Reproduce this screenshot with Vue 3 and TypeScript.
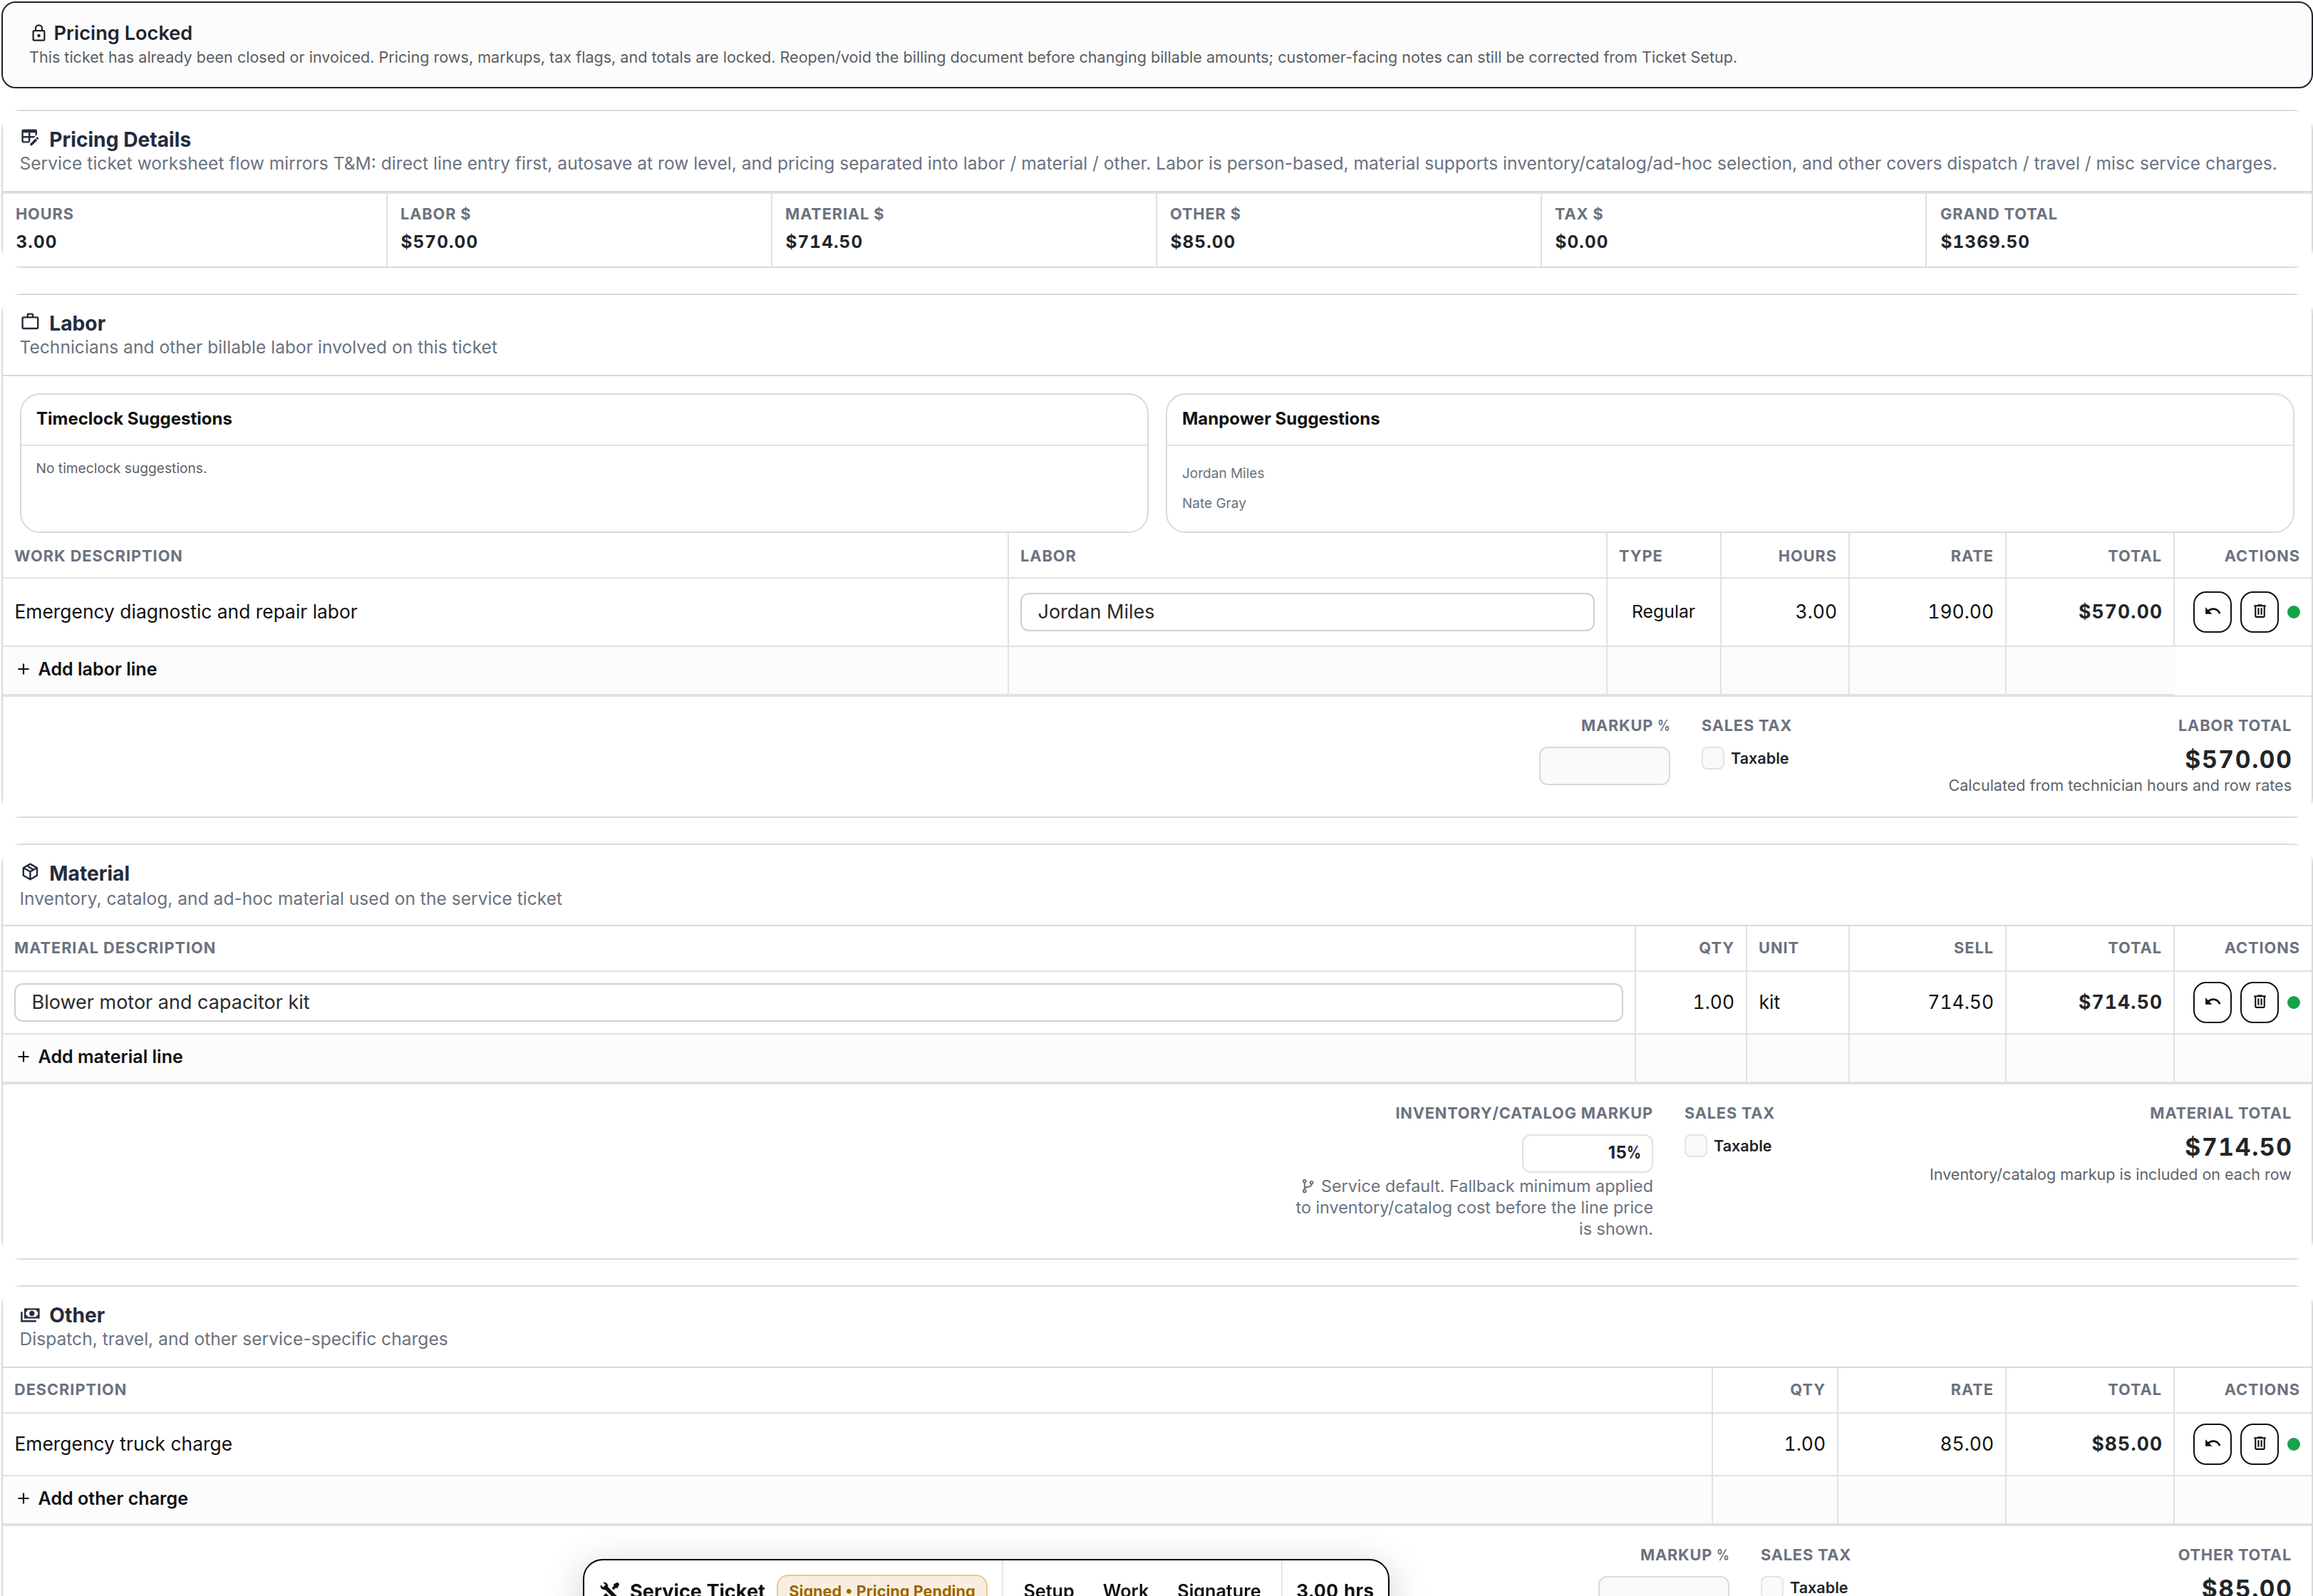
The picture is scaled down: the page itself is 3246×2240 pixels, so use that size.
<script setup lang="ts">
interface Column {
  label: string
  width: number
  end?: boolean
}

interface Cell {
  text: string
  kind: 'text' | 'input' | 'select' | 'number' | 'total' | 'actions'
}

interface Section {
  key: string
  title: string
  subtitle: string
  icon: string
  columns: Column[]
  row: Cell[]
  addLabel: string
  markupLabel: string
  markupPercent?: boolean
  markupValue?: string
  markupNote?: string
  totalLabel: string
  total: string
  totalNote: string
  totalWidth: number
}

const icons = {
  lock: 'M12,17C10.89,17 10,16.1 10,15C10,13.89 10.89,13 12,13A2,2 0 0,1 14,15A2,2 0 0,1 12,17M18,20V10H6V20H18M18,8A2,2 0 0,1 20,10V20A2,2 0 0,1 18,22H6C4.89,22 4,21.1 4,20V10C4,8.89 4.89,8 6,8H7V6A5,5 0 0,1 12,1A5,5 0 0,1 17,6V8H18M12,3A3,3 0 0,0 9,6V8H15V6A3,3 0 0,0 12,3Z',
  tableEdit: 'M21.7,13.35L20.7,14.35L18.65,12.3L19.65,11.3C19.86,11.09 20.21,11.09 20.42,11.3L21.7,12.58C21.91,12.79 21.91,13.14 21.7,13.35M12,18.94L18.07,12.88L20.12,14.93L14.06,21H12V18.94M4,2H18A2,2 0 0,1 20,4V8.17L16.17,12H12V16.17L10.17,18H4A2,2 0 0,1 2,16V4A2,2 0 0,1 4,2M4,6V10H10V6H4M12,6V10H18V6H12M4,12V16H10V12H4Z',
  briefcase: 'M20,6H16V4A2,2 0 0,0 14,2H10A2,2 0 0,0 8,4V6H4A2,2 0 0,0 2,8V19A2,2 0 0,0 4,21H20A2,2 0 0,0 22,19V8A2,2 0 0,0 20,6M10,4H14V6H10V4M20,19H4V8H20V19Z',
  box: 'M21,16.5C21,16.88 20.79,17.21 20.47,17.38L12.57,21.82C12.41,21.94 12.21,22 12,22C11.79,22 11.59,21.94 11.43,21.82L3.53,17.38C3.21,17.21 3,16.88 3,16.5V7.5C3,7.12 3.21,6.79 3.53,6.62L11.43,2.18C11.59,2.06 11.79,2 12,2C12.21,2 12.41,2.06 12.57,2.18L20.47,6.62C20.79,6.79 21,7.12 21,7.5V16.5M12,4.15L10.11,5.22L16,8.61L17.96,7.5L12,4.15M6.04,7.5L12,10.85L13.96,9.75L8.08,6.35L6.04,7.5M5,15.91L11,19.29V12.58L5,9.21V15.91M19,15.91V9.21L13,12.58V19.29L19,15.91Z',
  cash: 'M5,6H23V18H5V6M14,9A3,3 0 0,1 17,12A3,3 0 0,1 14,15A3,3 0 0,1 11,12A3,3 0 0,1 14,9M9,8A2,2 0 0,1 7,10V14A2,2 0 0,1 9,16H19A2,2 0 0,1 21,14V10A2,2 0 0,1 19,8H9M1,10H3V20H19V22H1V10Z',
  plus: 'M19,13H13V19H11V13H5V11H11V5H13V11H19V13Z',
  undo: 'M12.5,8C9.85,8 7.45,9 5.6,10.6L2,7V16H11L7.38,12.38C8.77,11.22 10.54,10.5 12.5,10.5C16.04,10.5 19.05,12.81 20.1,16L22.47,15.22C21.08,11.03 17.15,8 12.5,8Z',
  trash: 'M9,3V4H4V6H5V19A2,2 0 0,0 7,21H17A2,2 0 0,0 19,19V6H20V4H15V3H9M7,6H17V19H7V6M9,8V17H11V8H9M13,8V17H15V8H13Z',
  branch: 'M13,14C9.64,14 8.54,15.35 8.18,16.24C9.25,16.7 10,17.76 10,19A3,3 0 0,1 7,22A3,3 0 0,1 4,19C4,17.69 4.83,16.58 6,16.17V7.83C4.83,7.42 4,6.31 4,5A3,3 0 0,1 7,2A3,3 0 0,1 10,5C10,6.31 9.17,7.42 8,7.83V13.12C8.88,12.47 10.16,12 12,12C14.67,12 15.56,10.66 15.85,9.77C14.77,9.32 14,8.25 14,7A3,3 0 0,1 17,4A3,3 0 0,1 20,7C20,8.34 19.12,9.5 17.91,9.86C17.65,11.29 16.68,14 13,14M7,18A1,1 0 0,0 6,19A1,1 0 0,0 7,20A1,1 0 0,0 8,19A1,1 0 0,0 7,18M7,4A1,1 0 0,0 6,5A1,1 0 0,0 7,6A1,1 0 0,0 8,5A1,1 0 0,0 7,4M17,6A1,1 0 0,0 16,7A1,1 0 0,0 17,8A1,1 0 0,0 18,7A1,1 0 0,0 17,6Z',
  tools: 'M21.71 20.29L20.29 21.71A1 1 0 0 1 18.88 21.71L7 9.85A3.81 3.81 0 0 1 6 10A4 4 0 0 1 2.22 4.7L4.76 7.24L5.29 6.71L6.71 5.29L7.24 4.76L4.7 2.22A4 4 0 0 1 10 6A3.81 3.81 0 0 1 9.85 7L21.71 18.88A1 1 0 0 1 21.71 20.29M2.29 18.88A1 1 0 0 0 2.29 20.29L3.71 21.71A1 1 0 0 0 5.12 21.71L10.59 16.25L7.76 13.42M20 2L16 4V6L13.83 8.17L15.83 10.17L18 8H20L22 4Z',
}

const metrics = [
  { label: 'Hours', value: '3.00' },
  { label: 'Labor $', value: '$570.00' },
  { label: 'Material $', value: '$714.50' },
  { label: 'Other $', value: '$85.00' },
  { label: 'Tax $', value: '$0.00' },
  { label: 'Grand Total', value: '$1369.50' },
]

const manpower = ['Jordan Miles', 'Nate Gray']

const sections: Section[] = [
  {
    key: 'labor',
    title: 'Labor',
    subtitle: 'Technicians and other billable labor involved on this ticket',
    icon: icons.briefcase,
    columns: [
      { label: 'Work Description', width: 1412 },
      { label: 'Labor', width: 840 },
      { label: 'Type', width: 160 },
      { label: 'Hours', width: 180, end: true },
      { label: 'Rate', width: 220, end: true },
      { label: 'Total', width: 236, end: true },
      { label: 'Actions', width: 192, end: true },
    ],
    row: [
      { text: 'Emergency diagnostic and repair labor', kind: 'text' },
      { text: 'Jordan Miles', kind: 'input' },
      { text: 'Regular', kind: 'select' },
      { text: '3.00', kind: 'number' },
      { text: '190.00', kind: 'number' },
      { text: '$570.00', kind: 'total' },
      { text: '', kind: 'actions' },
    ],
    addLabel: 'Add labor line',
    markupLabel: 'Markup',
    markupPercent: true,
    totalLabel: 'Labor Total',
    total: '$570.00',
    totalNote: 'Calculated from technician hours and row rates',
    totalWidth: 482,
  },
  {
    key: 'material',
    title: 'Material',
    subtitle: 'Inventory, catalog, and ad-hoc material used on the service ticket',
    icon: icons.box,
    columns: [
      { label: 'Material Description', width: 2292 },
      { label: 'Qty', width: 156, end: true },
      { label: 'Unit', width: 144 },
      { label: 'Sell', width: 220, end: true },
      { label: 'Total', width: 236, end: true },
      { label: 'Actions', width: 192, end: true },
    ],
    row: [
      { text: 'Blower motor and capacitor kit', kind: 'input' },
      { text: '1.00', kind: 'number' },
      { text: 'kit', kind: 'text' },
      { text: '714.50', kind: 'number' },
      { text: '$714.50', kind: 'total' },
      { text: '', kind: 'actions' },
    ],
    addLabel: 'Add material line',
    markupLabel: 'Inventory/Catalog Markup',
    markupValue: '15',
    markupNote: 'Service default. Fallback minimum applied to inventory/catalog cost before the line price is shown.',
    totalLabel: 'Material Total',
    total: '$714.50',
    totalNote: 'Inventory/catalog markup is included on each row',
    totalWidth: 506,
  },
  {
    key: 'other',
    title: 'Other',
    subtitle: 'Dispatch, travel, and other service-specific charges',
    icon: icons.cash,
    columns: [
      { label: 'Description', width: 2400 },
      { label: 'Qty', width: 176, end: true },
      { label: 'Rate', width: 236, end: true },
      { label: 'Total', width: 236, end: true },
      { label: 'Actions', width: 192, end: true },
    ],
    row: [
      { text: 'Emergency truck charge', kind: 'text' },
      { text: '1.00', kind: 'number' },
      { text: '85.00', kind: 'number' },
      { text: '$85.00', kind: 'total' },
      { text: '', kind: 'actions' },
    ],
    addLabel: 'Add other charge',
    markupLabel: 'Markup',
    markupPercent: true,
    totalLabel: 'Other Total',
    total: '$85.00',
    totalNote: '',
    totalWidth: 399,
  },
]

const tracks = (columns: Column[]) => ({
  gridTemplateColumns: columns.map((c) => `${c.width}px`).join(' '),
})
</script>

<template>
  <main class="page">
    <section class="alert">
      <div class="alert-title">
        <svg class="icon" viewBox="0 0 24 24"><path :d="icons.lock" /></svg>
        <span>Pricing Locked</span>
      </div>
      <div class="alert-text">
        This ticket has already been closed or invoiced. Pricing rows, markups, tax flags, and totals are locked.
        Reopen/void the billing document before changing billable amounts; customer-facing notes can still be corrected
        from Ticket Setup.
      </div>
    </section>

    <section class="card pricing">
      <header class="card-head">
        <h2><svg class="icon" viewBox="0 0 24 24"><path :d="icons.tableEdit" /></svg><span>Pricing Details</span></h2>
        <p>
          Service ticket worksheet flow mirrors T&amp;M: direct line entry first, autosave at row level, and pricing
          separated into labor / material / other. Labor is person-based, material supports inventory/catalog/ad-hoc
          selection, and other covers dispatch / travel / misc service charges.
        </p>
      </header>
      <div class="metrics">
        <div v-for="m in metrics" :key="m.label" class="metric">
          <div class="label">{{ m.label }}</div>
          <div class="metric-value">{{ m.value }}</div>
        </div>
      </div>
    </section>

    <section v-for="s in sections" :key="s.key" class="card" :class="s.key">
      <header class="card-head">
        <h2><svg class="icon" viewBox="0 0 24 24"><path :d="s.icon" /></svg><span>{{ s.title }}</span></h2>
        <p>{{ s.subtitle }}</p>
      </header>

      <div v-if="s.key === 'labor'" class="suggestions">
        <div class="suggestion">
          <h3>Timeclock Suggestions</h3>
          <div class="suggestion-empty">No timeclock suggestions.</div>
        </div>
        <div class="suggestion">
          <h3>Manpower Suggestions</h3>
          <div class="people">
            <div v-for="p in manpower" :key="p">{{ p }}</div>
          </div>
        </div>
      </div>

      <div class="grid grid-head" :style="tracks(s.columns)">
        <div v-for="c in s.columns" :key="c.label" class="cell label" :class="{ end: c.end }">{{ c.label }}</div>
      </div>
      <div class="grid grid-row" :style="tracks(s.columns)">
        <div v-for="(c, i) in s.row" :key="i" class="cell" :class="c.kind">
          <template v-if="c.kind === 'actions'">
            <span class="btn"><svg viewBox="0 0 24 24"><path :d="icons.undo" /></svg></span>
            <span class="btn"><svg viewBox="0 0 24 24"><path :d="icons.trash" /></svg></span>
            <span class="dot"></span>
          </template>
          <span v-else-if="c.kind === 'input'" class="field">{{ c.text }}</span>
          <span v-else class="value">{{ c.text }}</span>
        </div>
      </div>
      <div class="grid grid-add" :style="tracks(s.columns)">
        <div v-for="(c, i) in s.columns" :key="c.label" class="cell">
          <span v-if="i === 0" class="add">
            <svg viewBox="0 0 24 24"><path :d="icons.plus" /></svg>{{ s.addLabel }}
          </span>
        </div>
      </div>

      <footer class="foot">
        <div class="foot-markup">
          <div class="label">{{ s.markupLabel }}<template v-if="s.markupPercent">&nbsp;<span class="pct">%</span></template></div>
          <div class="markup" :class="{ filled: s.markupValue }">
            <template v-if="s.markupValue">{{ s.markupValue }}<span class="pct">%</span></template>
          </div>
          <div v-if="s.markupNote" class="markup-note">
            <svg viewBox="0 0 24 24"><path :d="icons.branch" /></svg> {{ s.markupNote }}
          </div>
        </div>
        <div class="foot-tax">
          <div class="label">Sales Tax</div>
          <div class="tax"><span class="check"></span>Taxable</div>
        </div>
        <div class="foot-total" :style="{ width: s.totalWidth + 'px' }">
          <div class="label">{{ s.totalLabel }}</div>
          <div class="foot-amount">{{ s.total }}</div>
          <div class="foot-note">{{ s.totalNote }}</div>
        </div>
      </footer>
    </section>

    <nav class="dock">
      <div class="dock-main">
        <svg viewBox="0 0 24 24"><path :d="icons.tools" /></svg>
        <strong>Service Ticket</strong>
        <span class="badge">Signed • Pricing Pending</span>
      </div>
      <div class="dock-links"><span>Setup</span><span>Work</span><span>Signature</span></div>
      <div class="dock-hours">3.00 hrs</div>
    </nav>
  </main>
</template>

<style>
html,
body {
  margin: 0;
  overflow: hidden;
  background: #fff;
}
</style>

<style scoped>
.page {
  box-sizing: border-box;
  width: 3246px;
  height: 2240px;
  overflow: hidden;
  padding: 2px 0 0 2px;
  font-family: Inter, 'Liberation Sans', sans-serif;
  color: #111;
}
.page *,
.page *::before {
  box-sizing: border-box;
}
svg {
  display: block;
  flex: none;
  fill: currentColor;
}
h2,
h3,
p {
  margin: 0;
}

.alert {
  height: 122px;
  padding: 25px 36px 0 37px;
  border: 2px solid #212529;
  border-radius: 20px;
  background: #fcfcfc;
}
.alert-title {
  display: flex;
  align-items: center;
  gap: 7.5px;
  height: 34px;
  font-size: 27.2px;
  font-weight: 600;
  color: #212529;
}
.alert-title .icon {
  width: 27px;
  height: 27px;
}
.alert-text {
  padding-top: 1px;
  font-size: 21.57px;
  line-height: 32px;
  white-space: nowrap;
  color: #5a5e62;
}

.card {
  margin-top: 36px;
  border: 2px solid #dadada;
  border-radius: 29px;
}
.pricing {
  margin-top: 30px;
}
.card-head {
  height: 114px;
  padding: 22px 24px 0 23.5px;
  border-bottom: 2px solid #dadada;
  background: #fff;
}
.card-head h2 {
  display: flex;
  align-items: center;
  gap: 13px;
  height: 36px;
  font-size: 28.2px;
  font-weight: 700;
  line-height: 36px;
  color: #252b3d;
}
.card-head .icon {
  width: 28.8px;
  height: 28.8px;
  margin-bottom: 6px;
}
.card-head p {
  margin-top: -1px;
  font-size: 24.6px;
  line-height: 32px;
  white-space: nowrap;
  color: #6b7280;
}
.material .card-head p {
  padding-top: 2px;
}

.label {
  font-size: 21.76px;
  font-weight: 700;
  letter-spacing: 0.04em;
  text-transform: uppercase;
  white-space: nowrap;
  color: #6b7280;
}
.pct {
  display: inline-block;
  width: 0.82em;
  letter-spacing: 0;
  font-weight: 600;
  text-align: left;
  transform: scaleX(0.82);
  transform-origin: left;
}

.metrics {
  display: grid;
  grid-template-columns: repeat(6, 540px);
  height: 104px;
  border-top: 2px solid #e1e1e1;
  background: #fff;
}
.metric {
  padding: 14px 18px 0;
  border-right: 2px solid #e1e1e1;
}
.metric:last-child {
  border-right: 0;
  padding-left: 19px;
}
.metric .label {
  line-height: 28px;
}
.metric-value {
  padding-top: 8px;
  padding-left: 0.5px;
  font-size: 24.32px;
  font-weight: 700;
  letter-spacing: 1.1px;
  line-height: 34px;
  font-variant-numeric: tabular-nums;
  color: #212529;
}

.suggestions {
  display: flex;
  gap: 24px;
  padding: 24px 24px 0;
  background: #fff;
}
.suggestion {
  width: 1584px;
  height: 196px;
  border: 2px solid #dadada;
  border-radius: 28px;
  overflow: hidden;
}
.suggestion h3 {
  height: 72px;
  padding: 17px 20px 0 21px;
  border-bottom: 2px solid #e1e1e1;
  font-size: 24px;
  font-weight: 700;
  line-height: 34px;
}
.suggestion-empty,
.people {
  padding: 16px 20px 0 20.5px;
  font-size: 19.2px;
  line-height: 30px;
  color: #5f6368;
}
.people {
  padding-top: 18px;
  padding-left: 21px;
  font-size: 19px;
  line-height: 42px;
  color: #6b7280;
}

.grid {
  display: grid;
  background: #fff;
}
.cell {
  display: flex;
  align-items: center;
  padding: 0 16px;
  border-right: 2px solid #e1e1e1;
  border-bottom: 2px solid #e1e1e1;
  white-space: nowrap;
}
.cell:last-child {
  border-right: 0;
}
.grid-head {
  height: 64px;
}
.grid-head .cell {
  padding-bottom: 2px;
  letter-spacing: 0.044em;
}
.labor .grid-head .cell {
  padding-top: 1px;
  padding-bottom: 0;
}
.end {
  justify-content: flex-end;
}
.grid-row {
  height: 88px;
  font-size: 26.4px;
}
.labor .grid-row {
  height: 96px;
}
.value {
  padding-bottom: 2px;
}
.grid-row .text {
  padding-left: 16.5px;
}
.grid-row .select {
  padding-left: 34px;
  font-size: 24.8px;
}
.number,
.total {
  justify-content: flex-end;
  font-variant-numeric: tabular-nums;
}
.total {
  font-weight: 700;
  color: #212529;
}
.total .value {
  margin-right: -1.2px;
  letter-spacing: 1.2px;
}
.field {
  width: 100%;
  height: 54px;
  padding: 0 22.5px;
  border: 2px solid #d0d0d0;
  border-radius: 12px;
  font-size: 27px;
  line-height: 49px;
  color: #2b2b2b;
}
.cell.actions {
  gap: 12px;
  justify-content: flex-end;
}
.btn {
  display: flex;
  justify-content: center;
  width: 54px;
  height: 58px;
  padding-top: 13px;
  border: 2px solid #111;
  border-radius: 18px;
}
.btn svg {
  width: 25px;
  height: 25px;
}
.dot {
  width: 18px;
  height: 18px;
  border-radius: 50%;
  background: #16a34a;
}
.grid-add {
  height: 68px;
}
.grid-add .cell {
  background: #fcfcfc;
}
.labor .grid-add .cell:last-child {
  border-bottom: 0;
  background: #fff;
}
.labor .grid-add .cell:nth-last-child(2) {
  border-right: 0;
}
.add {
  display: flex;
  align-items: center;
  gap: 7.5px;
  padding-bottom: 4px;
  font-size: 25.1px;
  font-weight: 600;
}
.add svg {
  width: 26px;
  height: 26px;
}

.foot {
  display: flex;
  justify-content: flex-end;
  gap: 44px;
  height: 170px;
  padding: 26px 28px 0 0;
  border-top: 2px solid #e1e1e1;
  background: #fff;
}
.material .foot {
  height: 246px;
}
.foot .label {
  line-height: 28px;
  letter-spacing: 0.037em;
}
.foot .label .pct {
  letter-spacing: 0;
}
.foot-markup {
  display: flex;
  flex-direction: column;
  align-items: flex-end;
  width: 520px;
}
.markup {
  width: 184px;
  height: 54px;
  margin-top: 16px;
  padding-right: 15px;
  border: 2px solid #dadada;
  border-radius: 12px;
  background: #fafafa;
  font-size: 24px;
  font-weight: 700;
  letter-spacing: 0.4px;
  line-height: 48px;
  text-align: right;
  color: #212529;
}
.markup.filled {
  border-color: #e1e1e1;
  background: #fff;
}
.markup .pct {
  font-weight: 700;
}
.markup-note {
  margin-top: 4px;
  font-size: 23.36px;
  line-height: 30px;
  text-align: right;
  color: #6b7280;
}
.markup-note svg {
  display: inline-block;
  width: 23.4px;
  height: 23.4px;
  vertical-align: -3px;
}
.foot-tax {
  width: 302px;
}
.tax {
  display: flex;
  align-items: center;
  gap: 9px;
  height: 32px;
  margin-top: 16px;
  font-size: 21.6px;
  font-weight: 600;
  color: #212529;
}
.check {
  width: 32px;
  height: 32px;
  border: 2px solid #e4e4e4;
  border-radius: 8px;
  background: #fafafa;
}
.foot-total {
  text-align: right;
  white-space: nowrap;
}
.foot-amount {
  margin-top: 12px;
  margin-right: -1.7px;
  font-size: 33.6px;
  font-weight: 700;
  letter-spacing: 1.7px;
  line-height: 44px;
  font-variant-numeric: tabular-nums;
  color: #212529;
}
.foot-note {
  margin-top: -2px;
  margin-left: -12px;
  font-size: 21.56px;
  line-height: 32px;
  color: #5f6368;
}
.material .foot-note {
  padding-top: 2px;
}

.dock {
  position: fixed;
  left: 818px;
  top: 2188px;
  display: flex;
  width: 1132px;
  height: 92px;
  border: 2px solid #000;
  border-radius: 28px;
  background: #fff;
  box-shadow: 0 12px 56px rgba(0, 0, 0, 0.2);
  color: #111;
  white-space: nowrap;
}
.dock-main {
  display: flex;
  align-items: center;
  width: 588px;
  padding-left: 20px;
  border-right: 2px solid #e5e7eb;
}
.dock-main svg {
  width: 32px;
  height: 32px;
}
.dock-main strong {
  width: 206px;
  margin-left: 12px;
  padding-bottom: 2px;
  font-size: 27.1px;
  font-weight: 700;
}
.badge {
  width: 296px;
  height: 48px;
  border: 2px solid #e8c990;
  border-radius: 16px;
  background: #f7eee0;
  font-size: 21.7px;
  font-weight: 700;
  line-height: 43px;
  text-align: center;
  color: #9a6700;
}
.dock-links {
  display: flex;
  align-items: center;
  justify-content: center;
  gap: 40px;
  width: 392px;
  padding-bottom: 2px;
  border-right: 2px solid #e5e7eb;
  font-size: 25.2px;
  font-weight: 600;
}
.dock-hours {
  flex: 1;
  line-height: 86px;
  text-align: center;
  font-size: 26px;
  font-weight: 700;
  letter-spacing: 0.4px;
  font-variant-numeric: tabular-nums;
}
</style>
